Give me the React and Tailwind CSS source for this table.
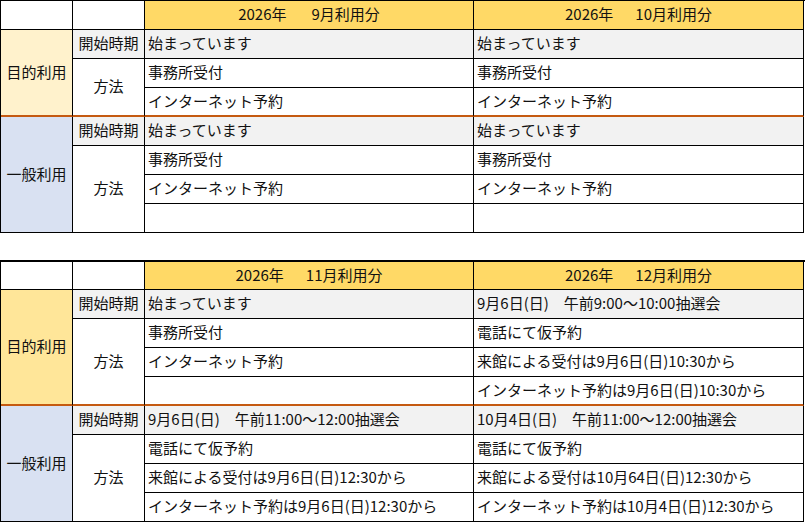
import React from "react";

const ORANGE = "border-b-2 border-b-[#C55A11]";

function Cell({ className = "", children, center = false }) {
  return (
    <div
      className={`flex items-center pb-[3px] border-r border-b border-black leading-none whitespace-nowrap ${
        center ? "justify-center" : "justify-start pl-[3px]"
      } ${className}`}
    >
      {children}
    </div>
  );
}

function Header({ month }) {
  return (
    <Cell center className="bg-[#FFD966]">
      <span>2026年</span>
      <span className={month < 10 ? "ml-[25px]" : "ml-[22px]"}>{month}月利用分</span>
    </Cell>
  );
}

function ScheduleTable({ months, purposeBg, purpose, general, thickTop }) {
  // purpose.rows: how many rows 目的利用 spans (3 or 4)
  const tall = purpose.rows === 4;
  return (
    <div
      className={`grid grid-cols-[72px_72px_329px_330px] border-l border-black ${
        thickTop ? "border-t-2" : "border-t"
      }`}
      style={{ gridTemplateRows: `${thickTop ? 28 : 29}px repeat(${purpose.rows + 4}, 29px)` }}
    >
      <Cell />
      <Cell />
      <Header month={months[0]} />
      <Header month={months[1]} />

      {/* 目的利用 */}
      <Cell center className={`${purposeBg} ${ORANGE} ${tall ? "row-span-4" : "row-span-3"}`}>
        目的利用
      </Cell>
      <Cell center className="bg-[#F2F2F2]">開始時期</Cell>
      <Cell className="bg-[#F2F2F2]">{purpose.start[0]}</Cell>
      <Cell className="bg-[#F2F2F2]">{purpose.start[1]}</Cell>
      <Cell center className={`${ORANGE} ${tall ? "row-span-3" : "row-span-2"}`}>
        方法
      </Cell>
      {purpose.methods.map((m, i) => {
        const last = i === purpose.methods.length - 1;
        return (
          <React.Fragment key={i}>
            <Cell className={last ? ORANGE : ""}>{m[0]}</Cell>
            <Cell className={last ? ORANGE : ""}>{m[1]}</Cell>
          </React.Fragment>
        );
      })}

      {/* 一般利用 */}
      <Cell center className="bg-[#D9E1F2] row-span-4">一般利用</Cell>
      <Cell center className="bg-[#F2F2F2]">開始時期</Cell>
      <Cell className="bg-[#F2F2F2]">{general.start[0]}</Cell>
      <Cell className="bg-[#F2F2F2]">{general.start[1]}</Cell>
      <Cell center className="row-span-3">方法</Cell>
      {general.methods.map((m, i) => (
        <React.Fragment key={i}>
          <Cell>{m[0]}</Cell>
          <Cell>{m[1]}</Cell>
        </React.Fragment>
      ))}
    </div>
  );
}

export default function App() {
  return (
    <div className="w-[805px] h-[523px] bg-white text-[#111] text-[15px] font-['Noto_Sans_CJK_JP',sans-serif] overflow-hidden">
      <ScheduleTable
        months={[9, 10]}
        purposeBg="bg-[#FFF2CC]"
        purpose={{
          rows: 3,
          start: ["始まっています", "始まっています"],
          methods: [
            ["事務所受付", "事務所受付"],
            ["インターネット予約", "インターネット予約"],
          ],
        }}
        general={{
          start: ["始まっています", "始まっています"],
          methods: [
            ["事務所受付", "事務所受付"],
            ["インターネット予約", "インターネット予約"],
            ["", ""],
          ],
        }}
      />
      <div className="h-[27px]" />
      <ScheduleTable
        months={[11, 12]}
        thickTop
        purposeBg="bg-[#FFE699]"
        purpose={{
          rows: 4,
          start: ["始まっています", "9月6日(日)　午前9:00～10:00抽選会"],
          methods: [
            ["事務所受付", "電話にて仮予約"],
            ["インターネット予約", "来館による受付は9月6日(日)10:30から"],
            ["", "インターネット予約は9月6日(日)10:30から"],
          ],
        }}
        general={{
          start: ["9月6日(日)　午前11:00～12:00抽選会", "10月4日(日)　午前11:00～12:00抽選会"],
          methods: [
            ["電話にて仮予約", "電話にて仮予約"],
            ["来館による受付は9月6日(日)12:30から", "来館による受付は10月64日(日)12:30から"],
            ["インターネット予約は9月6日(日)12:30から", "インターネット予約は10月4日(日)12:30から"],
          ],
        }}
      />
    </div>
  );
}
